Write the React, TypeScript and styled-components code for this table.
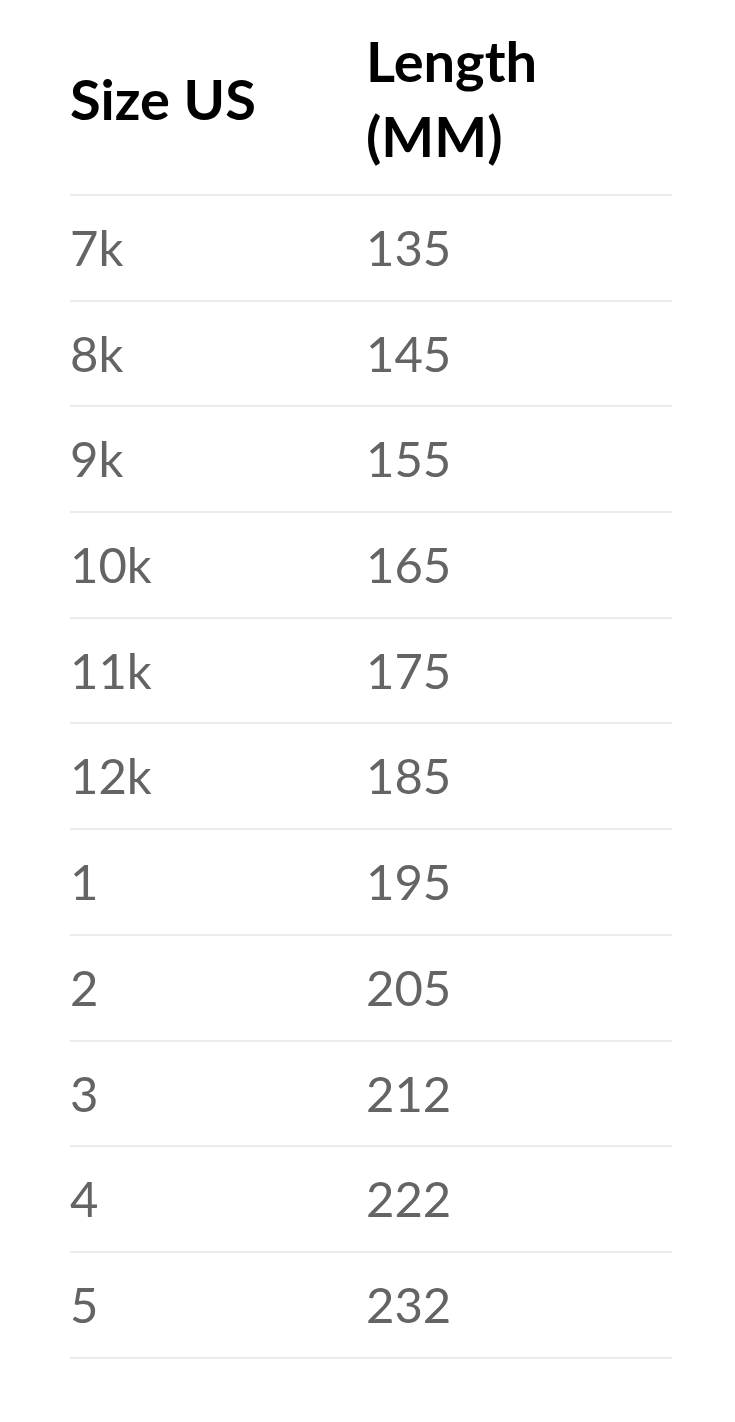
import React from "react";
import styled, { createGlobalStyle } from "styled-components";

const GlobalStyle = createGlobalStyle`
    html,
    body {
        margin: 0;
        padding: 0;
        background: #fff;
        font-family: Lato, "Open Sans", sans-serif;
    }
`;

const Page = styled.div`
    padding: 0 63px 0 70px;
`;

const SizeTable = styled.table`
    width: 100%;
    border-collapse: collapse;
    table-layout: fixed;
`;

const HeadCell = styled.th<{ wide?: boolean }>`
    width: ${(props) => (props.wide ? "auto" : "296px")};
    padding: 23px 0 21px;
    border-bottom: 2px solid #ebebeb;
    font-size: 56px;
    font-weight: 700;
    line-height: 75px;
    color: #000;
    text-align: left;
    vertical-align: middle;
`;

const Cell = styled.td`
    padding: 21px 0 22.7px;
    border-bottom: 2px solid #ebebeb;
    font-size: 49px;
    font-weight: 400;
    line-height: 60px;
    color: #646464;
    text-align: left;
`;

type SizeRow = {
    size: string;
    length: number;
};

const rows: SizeRow[] = [
    { size: "7k", length: 135 },
    { size: "8k", length: 145 },
    { size: "9k", length: 155 },
    { size: "10k", length: 165 },
    { size: "11k", length: 175 },
    { size: "12k", length: 185 },
    { size: "1", length: 195 },
    { size: "2", length: 205 },
    { size: "3", length: 212 },
    { size: "4", length: 222 },
    { size: "5", length: 232 },
];

const App = () => {
    return (
        <>
            <GlobalStyle />
            <Page>
                <SizeTable>
                    <thead>
                        <tr>
                            <HeadCell>Size US</HeadCell>
                            <HeadCell wide>
                                Length
                                <br />
                                (MM)
                            </HeadCell>
                        </tr>
                    </thead>
                    <tbody>
                        {rows.map((row) => (
                            <tr key={row.size}>
                                <Cell>{row.size}</Cell>
                                <Cell>{row.length}</Cell>
                            </tr>
                        ))}
                    </tbody>
                </SizeTable>
            </Page>
        </>
    );
};

export default App;
